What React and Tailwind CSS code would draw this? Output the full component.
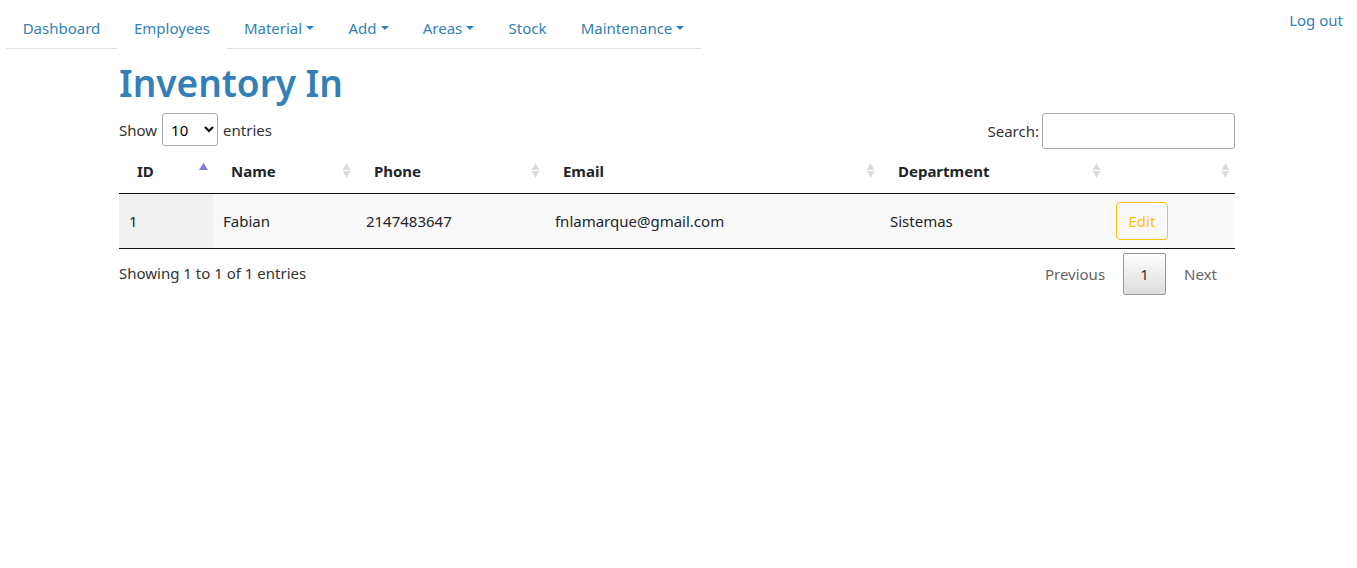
import React from "react";

const tabs = [
  { label: "Dashboard", width: "w-[111px]" },
  { label: "Employees", width: "w-[110px]", active: true },
  { label: "Material", width: "w-[104px]", menu: true },
  { label: "Add", width: "w-[75px]", menu: true },
  { label: "Areas", width: "w-[85px]", menu: true },
  { label: "Stock", width: "w-[73px]" },
  { label: "Maintenance", width: "w-[137px]", menu: true },
];

const columns = [
  { label: "ID", width: "w-[8.42%]", sorted: true },
  { label: "Name", width: "w-[12.81%]" },
  { label: "Phone", width: "w-[16.94%]" },
  { label: "Email", width: "w-[30.02%]" },
  { label: "Department", width: "w-[20.25%]" },
  { label: "", width: "w-[11.56%]" },
];

function Caret() {
  return (
    <svg className="h-1 w-2 shrink-0" viewBox="0 0 8 4" fill="currentColor" aria-hidden="true">
      <path d="M0 0h8L4 4z" />
    </svg>
  );
}

function SortIcon({ sorted }) {
  return (
    <svg className="h-[15px] w-[9px] shrink-0" viewBox="0 0 9 15" aria-hidden="true">
      {sorted ? (
        <path d="M4.5 0L9 7H0z" fill="#7f7fdd" />
      ) : (
        <path d="M4.5 0L8.5 7h-8zM.5 8h8l-4 7z" fill="#dcdcdc" />
      )}
    </svg>
  );
}

function Tab({ label, width, active, menu }) {
  const style = `flex h-[41px] items-center justify-center gap-1 border-b whitespace-nowrap ${
    active ? "border-white" : "border-[#dee2e6]"
  } ${width}`;
  return (
    <li>
      {menu ? (
        <button type="button" className={style} aria-haspopup="menu">
          {label}
          <Caret />
        </button>
      ) : (
        <a href="#" className={style} aria-current={active ? "page" : undefined}>
          {label}
        </a>
      )}
    </li>
  );
}

export default function App() {
  return (
    <div className="bg-white pr-[3px] font-['Noto_Sans',sans-serif] text-[15px] leading-6 text-[#212529]">
      <header className="flex items-start justify-between pt-2 pr-[11px] pl-1.5 text-[#337fb7]">
        <nav>
          <ul className="flex">
            {tabs.map((tab) => (
              <Tab key={tab.label} {...tab} />
            ))}
          </ul>
        </nav>
        <a href="#" className="whitespace-nowrap">Log out</a>
      </header>

      <main className="mx-auto max-w-[1140px] px-3">
        <h1 className="pt-2.5 pb-1.5 text-[37px] leading-12 font-semibold text-[#337fb7]">Inventory In</h1>

        <div className="flex items-start justify-between text-[#333333]">
          <label className="flex items-center gap-[5px]">
            Show
            <select className="h-[33px] w-14 rounded-[3px] border border-[#aaaaaa] bg-white px-1 text-black" defaultValue="10">
              <option>10</option>
              <option>25</option>
              <option>50</option>
              <option>100</option>
            </select>
            entries
          </label>
          <label className="flex items-center gap-[3px]">
            Search:
            <input type="search" className="h-9 w-[193px] rounded-[3px] border border-[#aaaaaa] bg-white px-1.5" />
          </label>
        </div>

        <table className="w-full table-fixed border-collapse text-left">
          <thead>
            <tr className="h-11 border-b border-[#111111]">
              {columns.map(({ label, width, sorted }, i) => (
                <th
                  key={i}
                  className={`pr-[5px] pl-[18px] font-bold ${width}`}
                  aria-sort={sorted ? "ascending" : undefined}
                >
                  <div className="flex items-center justify-between">
                    {label || <span />}
                    <SortIcon sorted={sorted} />
                  </div>
                </th>
              ))}
            </tr>
          </thead>
          <tbody>
            <tr className="h-[55px] border-b border-[#111111] bg-[#f9f9f9]">
              <td className="bg-[#f0f0f0] px-2.5">1</td>
              <td className="px-2.5">Fabian</td>
              <td className="px-2.5">2147483647</td>
              <td className="px-2.5">fnlamarque@gmail.com</td>
              <td className="px-2.5">Sistemas</td>
              <td className="px-2.5">
                <button type="button" className="block h-[38px] w-[52px] rounded border border-[#ffc107] text-[#ffc107]">
                  Edit
                </button>
              </td>
            </tr>
          </tbody>
        </table>

        <div className="flex items-start justify-between pt-1 text-[#333333]">
          <p className="pt-2">Showing 1 to 1 of 1 entries</p>
          <nav className="flex" aria-label="Pagination">
            <button type="button" disabled className="h-[42px] px-[18px] text-[#666666]">Previous</button>
            <button
              type="button"
              aria-current="page"
              className="h-[42px] w-[43px] rounded-[2px] border border-[#979797] bg-linear-to-b from-white to-[#dcdcdc]"
            >
              1
            </button>
            <button type="button" disabled className="h-[42px] px-[18px] text-[#666666]">Next</button>
          </nav>
        </div>
      </main>
    </div>
  );
}
